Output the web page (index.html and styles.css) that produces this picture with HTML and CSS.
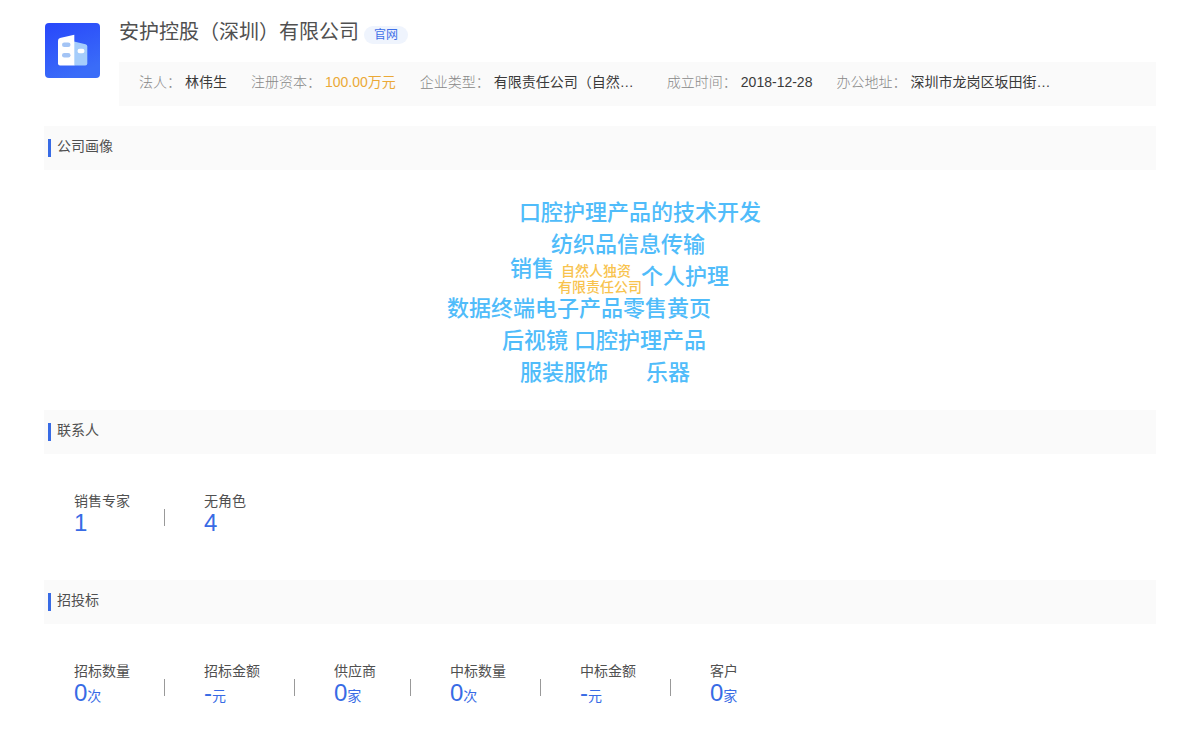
FILE: index.html
```html
<!DOCTYPE html>
<html lang="zh-CN">
<head>
<meta charset="utf-8">
<title>安护控股（深圳）有限公司</title>
<link rel="stylesheet" href="styles.css">
</head>
<body>
<main class="page">
  <header class="company">
    <svg class="logo" viewBox="0 0 55 55" aria-hidden="true">
      <defs>
        <linearGradient id="tile" x1="0" y1="0" x2="0.4" y2="1">
          <stop offset="0" stop-color="#2847fb"/>
          <stop offset="1" stop-color="#3a6cf8"/>
        </linearGradient>
      </defs>
      <rect width="55" height="55" rx="4" fill="url(#tile)"/>
      <path d="M29 18.500L40.500 21.200Q42.300 21.800 42.300 23.500V40.500Q42.300 42.500 40.300 42.500H29Z" fill="#a5cdfb"/>
      <path d="M15 15L29.300 11.800V42.500H15Q13 42.500 13 40.500V17.500Q13 15.500 15 15Z" fill="#fff"/>
      <rect x="17" y="19.500" width="8.500" height="4.500" rx="2.250" fill="#a3c4f5"/>
      <rect x="17" y="30" width="8.500" height="4.500" rx="2.250" fill="#a3c4f5"/>
      <rect x="32.500" y="25.700" width="7" height="4.500" rx="2.250" fill="#fff"/>
    </svg>
    <div class="company-body">
      <div class="title-row">
        <h1 class="company-name">安护控股（深圳）有限公司</h1>
        <a class="site-link" href="#">官网</a>
      </div>
      <dl class="facts">
        <div class="fact"><dt>法人：</dt><dd>林伟生</dd></div>
        <div class="fact"><dt>注册资本：</dt><dd class="capital">100.00万元</dd></div>
        <div class="fact"><dt>企业类型：</dt><dd class="long">有限责任公司（自然…</dd></div>
        <div class="fact"><dt>成立时间：</dt><dd>2018-12-28</dd></div>
        <div class="fact"><dt>办公地址：</dt><dd class="long">深圳市龙岗区坂田街…</dd></div>
      </dl>
    </div>
  </header>

  <section>
    <h2 class="section-title">公司画像</h2>
    <div class="cloud">
      <div class="cloud-canvas">
        <span class="word w1">口腔护理产品的技术开发</span>
        <span class="word w2">纺织品信息传输</span>
        <span class="word w3">销售</span>
        <span class="word small w4">自然人独资</span>
        <span class="word small w5">有限责任公司</span>
        <span class="word w6">个人护理</span>
        <span class="word w7">数据终端电子产品零售黄页</span>
        <span class="word w8">后视镜</span>
        <span class="word w9">口腔护理产品</span>
        <span class="word w10">服装服饰</span>
        <span class="word w11">乐器</span>
      </div>
    </div>
  </section>

  <section>
    <h2 class="section-title">联系人</h2>
    <dl class="stats">
      <div class="stat"><dt>销售专家</dt><dd>1</dd></div>
      <div class="stat"><dt>无角色</dt><dd>4</dd></div>
    </dl>
  </section>

  <section>
    <h2 class="section-title">招投标</h2>
    <dl class="stats">
      <div class="stat"><dt>招标数量</dt><dd>0<small>次</small></dd></div>
      <div class="stat"><dt>招标金额</dt><dd>-<small>元</small></dd></div>
      <div class="stat"><dt>供应商</dt><dd>0<small>家</small></dd></div>
      <div class="stat"><dt>中标数量</dt><dd>0<small>次</small></dd></div>
      <div class="stat"><dt>中标金额</dt><dd>-<small>元</small></dd></div>
      <div class="stat"><dt>客户</dt><dd>0<small>家</small></dd></div>
    </dl>
  </section>
</main>
</body>
</html>
```
FILE: styles.css
```css
* { box-sizing: border-box; }

body, h1, h2, dl, dd { margin: 0; }

body {
  background: #fff;
  color: #505050;
  font: 14px/20px "Liberation Sans", "Noto Sans CJK SC", sans-serif;
}

.page { padding: 17px 44px 0; }

.company {
  display: flex;
  gap: 19px;
  padding-left: 1px;
  margin-bottom: 20px;
}

.logo {
  flex: none;
  width: 55px;
  height: 55px;
  margin-top: 6px;
}

.company-body { flex: 1; min-width: 0; }

.title-row {
  display: flex;
  align-items: center;
  gap: 5px;
  height: 30px;
  margin-bottom: 15px;
}

.company-name {
  font-size: 20px;
  font-weight: 400;
  line-height: 30px;
}

.site-link {
  margin-top: 6px;
  padding: 0 10px;
  border-radius: 9px;
  background: #eff4fd;
  color: #3e6fe8;
  font-size: 12px;
  line-height: 18px;
  text-decoration: none;
}

.facts {
  display: flex;
  gap: 24px;
  padding: 10px 20px 14px;
  background: #fafafa;
  white-space: nowrap;
}

.fact { display: flex; gap: 4px; }
.fact dt { color: #888; font-weight: 300; }
.fact dd { color: #3a3a3a; }
.fact .capital { color: #eba937; }
.fact .long { width: 149px; }

.section-title {
  display: flex;
  align-items: center;
  gap: 6px;
  height: 44px;
  padding: 0 4px 4px;
  background: #fafafa;
  font-size: 14px;
  font-weight: 400;
}

.section-title::before {
  content: "";
  width: 3px;
  height: 18px;
  margin-top: 4px;
  background: #386be5;
}

.cloud {
  display: flex;
  justify-content: center;
  padding: 20px 0;
}

.cloud-canvas {
  position: relative;
  width: 400px;
  height: 200px;
}

.word {
  position: absolute;
  color: #50bcfa;
  font-size: 22px;
  font-weight: 500;
  line-height: 32px;
  white-space: nowrap;
}

.word.small {
  color: #f8c34e;
  font-size: 14px;
  line-height: 16px;
}

.w1 { left: 119px; top: 7px; }
.w2 { left: 151px; top: 39px; }
.w3 { left: 110px; top: 63px; }
.w4 { left: 161px; top: 73px; }
.w5 { left: 158px; top: 89px; }
.w6 { left: 241px; top: 71px; }
.w7 { left: 47px; top: 103px; }
.w8 { left: 102px; top: 135px; }
.w9 { left: 174px; top: 135px; }
.w10 { left: 120px; top: 167px; }
.w11 { left: 246px; top: 167px; }

.stats {
  display: flex;
  padding: 37px 30px 45px;
}

.stat {
  display: grid;
  grid-template-columns: auto auto;
  column-gap: 34px;
}

.stat:not(:last-child)::after {
  content: "";
  grid-column: 2;
  grid-row: 1 / 3;
  align-self: center;
  width: 1px;
  height: 17px;
  margin: 9px 39px 0 0;
  background: #999;
}

.stat dt { grid-column: 1; }

.stat dd {
  grid-column: 1;
  color: #386be5;
  font-size: 24px;
  line-height: 24px;
}

.stat small {
  font-size: 14px;
  line-height: 14px;
}
```
